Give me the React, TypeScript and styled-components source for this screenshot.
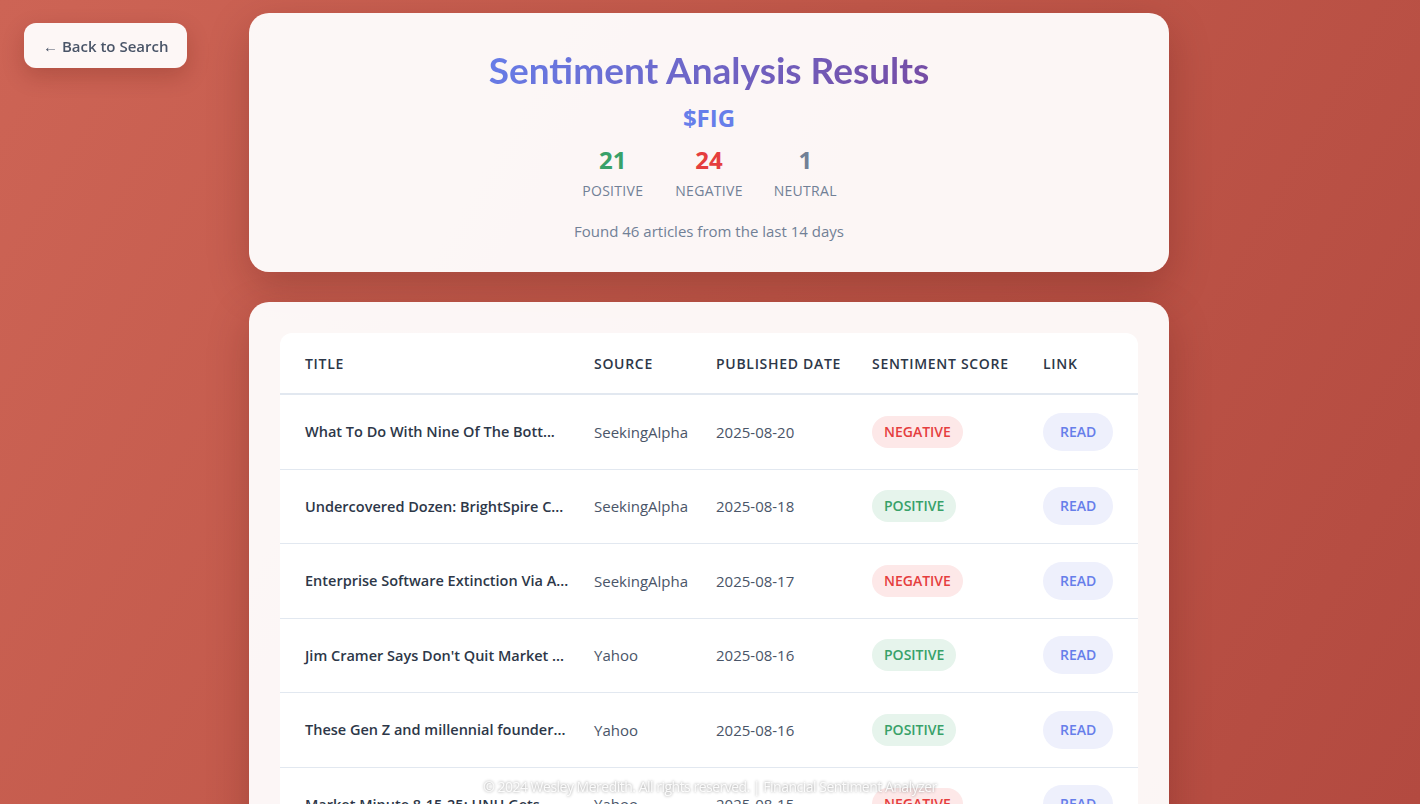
import styled, { createGlobalStyle } from 'styled-components';

const GlobalStyle = createGlobalStyle`
    * {
        box-sizing: border-box;
    }
    body {
        margin: 0;
        font-family: "Open Sans", "Noto Sans", sans-serif;
        background: linear-gradient(120deg, #cd6455 0%, #c05749 50%, #b34a40 100%);
        background-attachment: fixed;
        min-height: 100vh;
        color: #2d3748;
    }
`;

const Page = styled.div`
    padding: 13px 22px 60px 20px;
`;

const BackButton = styled.button`
    position: fixed;
    top: 23px;
    left: 24px;
    height: 45px;
    padding: 0 19px;
    border: none;
    border-radius: 12px;
    background: rgba(255, 255, 255, 0.95);
    color: #4a5568;
    font-family: inherit;
    font-size: 15px;
    font-weight: 600;
    box-shadow: 0 8px 22px rgba(80, 20, 10, 0.22);
    cursor: pointer;
`;

const Container = styled.main`
    max-width: 920px;
    margin: 0 auto;
    display: flex;
    flex-direction: column;
    gap: 30px;
`;

const Card = styled.section<{ $pad: string }>`
    background: rgba(255, 255, 255, 0.95);
    border-radius: 20px;
    padding: ${p => p.$pad};
    box-shadow: 0 15px 40px rgba(70, 15, 10, 0.25);
`;

const Header = styled.header`
    display: flex;
    flex-direction: column;
    align-items: center;
    text-align: center;
`;

const Title = styled.h1`
    margin: 0;
    font-family: Lato, "Open Sans", sans-serif;
    font-size: 37px;
    line-height: 48px;
    font-weight: 700;
    background: linear-gradient(135deg, #667eea 0%, #764ba2 100%);
    -webkit-background-clip: text;
    background-clip: text;
    color: transparent;
`;

const Ticker = styled.div`
    margin-top: 8px;
    font-size: 24px;
    line-height: 31px;
    font-weight: 700;
    color: #667eea;
`;

const Stats = styled.div`
    display: flex;
    gap: 30px;
    margin-top: 12px;
`;

const Stat = styled.div`
    display: flex;
    flex-direction: column;
    align-items: center;
    min-width: 65px;
`;

const StatValue = styled.span<{ $color: string }>`
    font-size: 24px;
    font-weight: 700;
    line-height: 30px;
    color: ${p => p.$color};
`;

const StatLabel = styled.span`
    margin-top: 6px;
    font-size: 14px;
    line-height: 19px;
    color: #718096;
    text-transform: uppercase;
    letter-spacing: 0.3px;
`;

const Summary = styled.p`
    margin: 21px 0 0;
    font-size: 15px;
    line-height: 20px;
    color: #718096;
`;

const Table = styled.div`
    background: #fff;
    border-radius: 12px;
    overflow: hidden;
`;

const Row = styled.div<{ $head?: boolean }>`
    display: grid;
    grid-template-columns: 290px 122px 156px 171px 1fr;
    align-items: center;
    height: ${p => (p.$head ? '62px' : '74.5px')};
    border-bottom: ${p => (p.$head ? '2px' : '1px')} solid #e2e8f0;

    & > :first-child {
        padding-left: 25px;
    }
`;

const HeadCell = styled.div`
    padding-left: 24px;
    font-size: 14px;
    font-weight: 600;
    color: #2d3748;
    text-transform: uppercase;
    letter-spacing: 0.7px;
    white-space: nowrap;
`;

const Cell = styled.div<{ $strong?: boolean }>`
    padding-left: 24px;
    font-size: ${p => (p.$strong ? '14.5px' : '15px')};
    font-weight: ${p => (p.$strong ? 600 : 400)};
    color: ${p => (p.$strong ? '#2d3748' : '#4a5568')};
    white-space: nowrap;
`;

const Badge = styled.span<{ $tone: 'positive' | 'negative' | 'neutral' }>`
    display: inline-block;
    padding: 6px 12px;
    border-radius: 16px;
    font-size: 14px;
    line-height: 20px;
    font-weight: 600;
    text-transform: uppercase;
    background: ${p => (p.$tone === 'positive' ? '#e6f4ec' : p.$tone === 'negative' ? '#fde8e8' : '#edf2f7')};
    color: ${p => (p.$tone === 'positive' ? '#38a169' : p.$tone === 'negative' ? '#e53e3e' : '#718096')};
`;

const ReadLink = styled.a`
    display: inline-block;
    padding: 9px 17px;
    border-radius: 20px;
    background: #eef0fc;
    color: #667eea;
    font-size: 14px;
    line-height: 20px;
    font-weight: 600;
    text-decoration: none;
    text-transform: uppercase;
`;

const Footer = styled.footer`
    position: fixed;
    left: 0;
    right: 0;
    bottom: 8px;
    text-align: center;
    font-size: 14px;
    color: rgba(255, 255, 255, 0.9);
    text-shadow: 0 0 3px rgba(0, 0, 0, 0.45);
    letter-spacing: -0.5px;
`;

type Tone = 'positive' | 'negative' | 'neutral';

const articles: { title: string; source: string; date: string; tone: Tone }[] = [
    { title: 'What To Do With Nine Of The Bott...', source: 'SeekingAlpha', date: '2025-08-20', tone: 'negative' },
    { title: 'Undercovered Dozen: BrightSpire C...', source: 'SeekingAlpha', date: '2025-08-18', tone: 'positive' },
    { title: 'Enterprise Software Extinction Via A...', source: 'SeekingAlpha', date: '2025-08-17', tone: 'negative' },
    { title: "Jim Cramer Says Don't Quit Market ...", source: 'Yahoo', date: '2025-08-16', tone: 'positive' },
    { title: 'These Gen Z and millennial founder...', source: 'Yahoo', date: '2025-08-16', tone: 'positive' },
    { title: 'Market Minute 8-15-25: UNH Gets...', source: 'Yahoo', date: '2025-08-15', tone: 'negative' },
    { title: 'Figma Stock Slides After Earnings...', source: 'Yahoo', date: '2025-08-14', tone: 'negative' },
];

export default function App(): JSX.Element {
    return (
        <>
            <GlobalStyle />
            <BackButton>← Back to Search</BackButton>
            <Page>
                <Container>
                    <Card $pad="33px 32px 31px">
                        <Header>
                            <Title>Sentiment Analysis Results</Title>
                            <Ticker>$FIG</Ticker>
                            <Stats>
                                <Stat>
                                    <StatValue $color="#38a169">21</StatValue>
                                    <StatLabel>Positive</StatLabel>
                                </Stat>
                                <Stat>
                                    <StatValue $color="#e53e3e">24</StatValue>
                                    <StatLabel>Negative</StatLabel>
                                </Stat>
                                <Stat>
                                    <StatValue $color="#718096">1</StatValue>
                                    <StatLabel>Neutral</StatLabel>
                                </Stat>
                            </Stats>
                            <Summary>Found 46 articles from the last 14 days</Summary>
                        </Header>
                    </Card>
                    <Card $pad="31px 31px 32px">
                        <Table>
                            <Row $head>
                                <HeadCell>Title</HeadCell>
                                <HeadCell>Source</HeadCell>
                                <HeadCell>Published Date</HeadCell>
                                <HeadCell>Sentiment Score</HeadCell>
                                <HeadCell>Link</HeadCell>
                            </Row>
                            {articles.map((a, i) => (
                                <Row key={i}>
                                    <Cell $strong>{a.title}</Cell>
                                    <Cell>{a.source}</Cell>
                                    <Cell>{a.date}</Cell>
                                    <Cell>
                                        <Badge $tone={a.tone}>{a.tone}</Badge>
                                    </Cell>
                                    <Cell>
                                        <ReadLink href="#">Read</ReadLink>
                                    </Cell>
                                </Row>
                            ))}
                        </Table>
                    </Card>
                </Container>
            </Page>
            <Footer>© 2024 Wesley Meredith. All rights reserved. | Financial Sentiment Analyzer</Footer>
        </>
    );
}
